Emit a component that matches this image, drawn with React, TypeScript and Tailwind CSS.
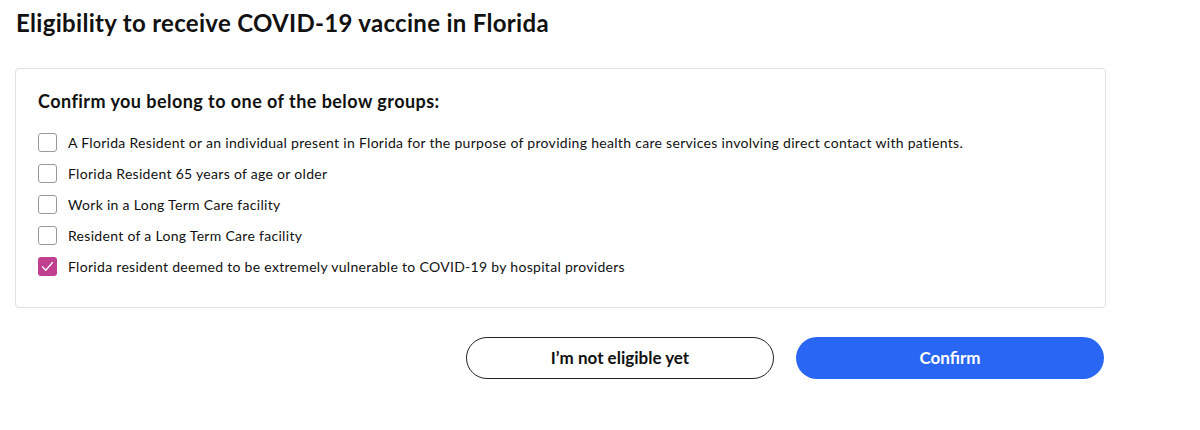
import React from "react";

const items = [
  { label: "A Florida Resident or an individual present in Florida for the purpose of providing health care services involving direct contact with patients.", checked: false },
  { label: "Florida Resident 65 years of age or older", checked: false },
  { label: "Work in a Long Term Care facility", checked: false },
  { label: "Resident of a Long Term Care facility", checked: false },
  { label: "Florida resident deemed to be extremely vulnerable to COVID-19 by hospital providers", checked: true },
];

export default function App() {
  return (
    <div className="w-[1200px] h-[430px] bg-white text-[#111] font-['Lato',sans-serif]">
      <div className="pl-[16px] pt-[8px] w-[1106px]">
        <h1 className="text-[24px] leading-[30px] font-bold tracking-[0.3px]">Eligibility to receive COVID-19 vaccine in Florida</h1>
        <div className="mt-[30px] ml-[-1px] border border-[#e0e0e0] rounded-[4px] pl-[22px] pt-[20px] pb-[31px]">
          <h2 className="text-[18px] leading-[24px] font-bold tracking-[0.45px]">Confirm you belong to one of the below groups:</h2>
          <div className="mt-[20px] flex flex-col gap-[12px]">
            {items.map((it, i) => (
              <label key={i} className="flex items-center gap-[11px] h-[19px]">
                {it.checked ? (
                  <span className="w-[19px] h-[19px] rounded-[3px] bg-[#c0408f] flex items-center justify-center">
                    <svg width="13" height="11" viewBox="0 0 13 11" fill="none">
                      <path d="M1.5 5.8 L4.8 9.2 L11.5 1.5" stroke="white" strokeWidth="1.3" strokeLinecap="round" strokeLinejoin="round" />
                    </svg>
                  </span>
                ) : (
                  <span className="w-[19px] h-[19px] rounded-[3px] border border-[#9a9a9a] bg-white" />
                )}
                <span className="text-[14px] leading-[19px] tracking-[0.3px]">{it.label}</span>
              </label>
            ))}
          </div>
        </div>
        <div className="mt-[29px] flex justify-end gap-[22px] pr-[2px]">
          <button className="w-[308px] h-[42px] rounded-full border border-[#222] bg-white text-[17px] font-bold text-[#111]">I’m not eligible yet</button>
          <button className="w-[308px] h-[42px] rounded-full bg-[#2a66f4] text-[17px] font-bold text-white">Confirm</button>
        </div>
      </div>
    </div>
  );
}
